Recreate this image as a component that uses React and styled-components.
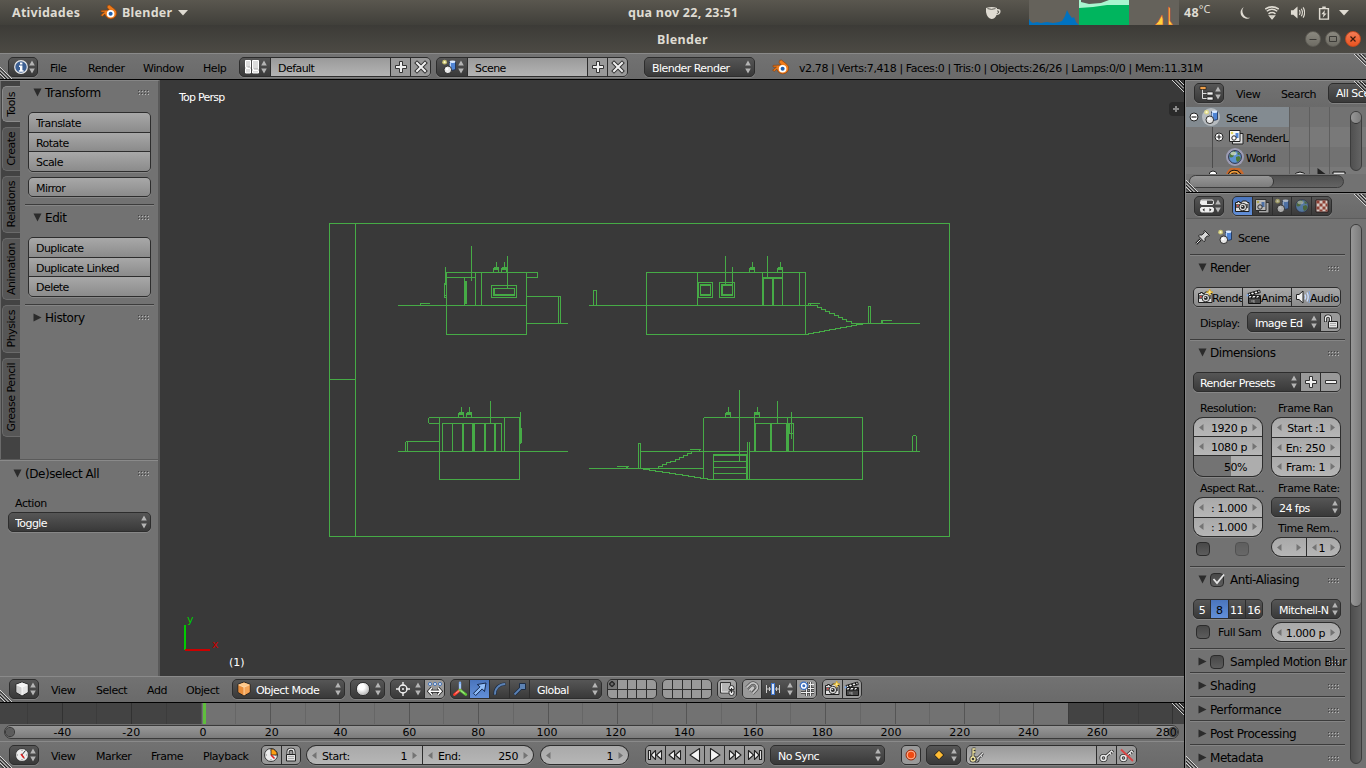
import React from "react";
import styled, { createGlobalStyle, css } from "styled-components";

const Global = createGlobalStyle`
    * { box-sizing: border-box; }
    body {
        margin: 0;
        width: 1366px;
        height: 768px;
        overflow: hidden;
        background: #393939;
        font-family: "DejaVu Sans", sans-serif;
        font-size: 11px;
        letter-spacing: -0.45px;
        color: #000;
        cursor: default;
    }
    svg { display: block; flex: none; }
`;

/* ---------- icons ---------- */

const Svg = ({ w = 16, h = w, box, children }) => (
    <svg width={w} height={h} viewBox={box || "0 0 16 16"} fill="none">{children}</svg>
);

const BlenderLogo = ({ size = 17 }) => (
    <Svg w={size} h={size}>
        <path d="M7.3 1.2 L9 1 L14 5 A5.6 5.2 0 1 1 4.6 9.5 L2.2 11.6 L0.6 10.6 L4.2 7.6 H1 L1 6 L7.8 5.7 H8.6 L6.6 3 Z" fill="#ee7b1b" stroke="#8a3d08" strokeWidth="0.6" />
        <circle cx="10" cy="9.2" r="3.6" fill="#fff" />
        <circle cx="10" cy="9.2" r="1.9" fill="#1f5fae" />
    </Svg>
);
const InfoIcon = () => (
    <Svg>
        <circle cx="8" cy="8" r="6.3" fill="#3c5f92" stroke="#e8e8e8" strokeWidth="1.2" />
        <path d="M7 3.5h2.4v2H7zM6 6.6h3.4v4.6h1.2v1.5H5.8v-1.5H7V8.1H6z" fill="#fff" />
    </Svg>
);
const ScreenIcon = () => (
    <Svg>
        <path d="M1.5 1.5h5v7h-5zM1.5 9.500h5v4.500h-5zM8.500 1.500h6v9h-6zM8.500 11.500h6v2.500h-6z" fill="#dcdcdc" stroke="#fff" />
        <path d="M3.500 8h2.500M10 10h4" stroke="#aaa" />
    </Svg>
);
const SceneIcon = ({ size = 16 }) => (
    <Svg w={size}>
        <path d="M8.500 2.500h6v8q-3 1.600-6 0z" fill="#4f84d4" stroke="#1b2c4c" strokeWidth="0.8" />
        <ellipse cx="11.500" cy="2.700" rx="3" ry="1.300" fill="#dcebff" />
        <path d="M9.300 4v6.500" stroke="#b9d4fb" strokeWidth="1.300" />
        <circle cx="6.800" cy="10.800" r="3.800" fill="#e6e6e6" stroke="#222" strokeWidth="0.9" />
        <circle cx="6" cy="9.900" r="1.400" fill="#fff" />
        <circle cx="3.600" cy="3.200" r="2.400" fill="#e9e27a" fillOpacity="0.75" />
        <circle cx="3.600" cy="3.200" r="1.100" fill="#fffbd0" />
    </Svg>
);
const PlusIcon = () => (
    <Svg><path d="M6.500 2.500h3v4h4v3h-4v4h-3v-4h-4v-3h4z" fill="#f0f0f0" stroke="#333" /></Svg>
);
const MinusIcon = () => (
    <Svg><path d="M2.500 6.500h11v3h-11z" fill="#f0f0f0" stroke="#333" /></Svg>
);
const CrossIcon = () => (
    <Svg>
        <path d="M4 4l8 8M12 4l-8 8" stroke="#333" strokeWidth="4" strokeLinecap="square" />
        <path d="M4 4l8 8M12 4l-8 8" stroke="#f0f0f0" strokeWidth="2" strokeLinecap="square" />
    </Svg>
);
const CubeIcon = ({ top = "#f4f4f4", left = "#cfcfcf", right = "#e4e4e4", edge = "#fff" }) => (
    <Svg>
        <path d="M8 1l6.200 2.400v8L8 15l-6.200-3.600v-8z" fill={left} stroke="#252525" />
        <path d="M8 1.600l5.400 2L8 6.200 2.600 3.600z" fill={top} />
        <path d="M8 6.200l5.500-2.500v7.400L8 14.300z" fill={right} />
        <path d="M2.500 3.800L8 6.200l5.500-2.400M8 6.200v8" stroke={edge} strokeWidth="0.800" />
    </Svg>
);
const SphereIcon = () => (
    <Svg>
        <defs>
            <radialGradient id="ball" cx="0.400" cy="0.350" r="0.700"><stop offset="0.300" stopColor="#fff" /><stop offset="1" stopColor="#aaa" /></radialGradient>
        </defs>
        <circle cx="8" cy="8" r="6.600" fill="url(#ball)" stroke="#1c1c1c" strokeWidth="0.800" />
    </Svg>
);
const PivotIcon = () => (
    <Svg>
        <circle cx="8" cy="8" r="4" stroke="#f0f0f0" strokeWidth="1.400" />
        <path d="M8 1v4M8 11v4M1 8h4M11 8h4" stroke="#f0f0f0" strokeWidth="1.400" />
        <circle cx="8" cy="8" r="1" fill="#f0f0f0" />
    </Svg>
);
const CentersIcon = () => (
    <Svg>
        <circle cx="3" cy="3" r="1.500" fill="#fff" stroke="#3a6cb4" /><circle cx="8" cy="3" r="1.500" fill="#fff" stroke="#3a6cb4" /><circle cx="13" cy="3" r="1.500" fill="#fff" stroke="#3a6cb4" />
        <path d="M5 6.800L1.800 10.300 5 13.800M11 6.800l3.200 3.500-3.200 3.500M2.500 10.300h11" stroke="#222" strokeWidth="3" />
        <path d="M5 6.800L1.800 10.300 5 13.800M11 6.800l3.200 3.500-3.200 3.500M2.500 10.300h11" stroke="#fff" strokeWidth="1.400" />
    </Svg>
);
const AxesIcon = () => (
    <Svg>
        <path d="M8 8.500V1.800" stroke="#7fb0f5" strokeWidth="2.400" strokeLinecap="round" />
        <path d="M8 9l-5.500 4.500" stroke="#ff3a2a" strokeWidth="2.800" strokeLinecap="round" />
        <path d="M8 9l5.800 4.500" stroke="#5fc837" strokeWidth="2.800" strokeLinecap="round" />
        <path d="M8 8V3M7.500 9.300L3.500 12.600M8.500 9.300L12.500 12.600" stroke="#fff" strokeOpacity="0.700" strokeWidth="0.800" />
    </Svg>
);
const TranslateIcon = () => (
    <Svg><path d="M1.500 12.300L8 5.800 5.300 3.500 14 2l-1.500 8.500-2.300-2.600-6.500 6.600z" fill="#8fbcf7" stroke="#14284e" /></Svg>
);
const RotateIcon = () => (
    <Svg>
        <path d="M3 14C2.500 7 7 3.200 13.500 3" stroke="#1c2c44" strokeWidth="3.200" />
        <path d="M3 13.600C2.700 7.300 7 3.300 13.200 3" stroke="#5c82b4" strokeWidth="1.900" />
    </Svg>
);
const ScaleIcon = () => (
    <Svg>
        <path d="M2.500 13.500L8 8" stroke="#1c2c44" strokeWidth="3.200" />
        <path d="M7.500 2.500h6v6h-6z" fill="#5c82b4" stroke="#1c2c44" />
        <path d="M2.500 13.500L9 7" stroke="#5c82b4" strokeWidth="1.800" />
    </Svg>
);
const LockCamIcon = () => (
    <Svg>
        <path d="M1.500 1.500h10v10.500h-10z" fill="#b5b5b5" stroke="#333" />
        <path d="M2.500 2.500v8.500h8" stroke="#e4e4e4" />
        <path d="M12.500 4.500q2.500 0 2.500 2.500v1.500h-5V7q0-2.500 2.500-2.500zM12.500 14.500q2.500 0 2.500-2.500v-2h-5v2q0 2.500 2.500 2.500z" fill="#e8e8e8" stroke="#2a2a2a" strokeWidth="0.900" />
        <path d="M12.500 7v5" stroke="#2a2a2a" />
    </Svg>
);
const MagnetIcon = () => (
    <Svg>
        <path d="M2.500 6.600l4-3.800q3-2 5.500.4 2.600 2.800.4 5.500L8.600 12.600M5 9.500L8.300 6.300q1-.6 1.300.7L7 10" stroke="#555" strokeWidth="3.200" />
        <path d="M2.500 6.600l4-3.800q3-2 5.500.4 2.600 2.800.4 5.500L8.600 12.600M5 9.500L8.300 6.300q1-.6 1.300.7L7 10" stroke="#c4c4c4" strokeWidth="1.700" />
    </Svg>
);
const IncrementIcon = () => (
    <Svg>
        <path d="M1.500 4v8M14.500 4v8M4.500 6v4M11.500 6v4M1.500 8h13" stroke="#ccc" />
        <path d="M6.600 2.500h2.800v11H6.600z" fill="#fff" stroke="#3f75cc" strokeWidth="1.200" />
    </Svg>
);
const SnapGridIcon = () => (
    <Svg>
        <path d="M7.500 1v14M11.500 1v14M2 11.500h13M9 7.500h6" stroke="#333" strokeWidth="2.600" />
        <path d="M7.500 1v14M11.500 1v14M2 11.500h13M9 7.500h6M10 3.500h5" stroke="#eee" strokeWidth="1.200" />
        <circle cx="4.800" cy="4.800" r="3.600" fill="#fff" stroke="#3a6fc2" strokeWidth="1.200" /><circle cx="4.800" cy="4.800" r="1.500" fill="#3a6fc2" />
    </Svg>
);
const CameraIcon = ({ spark }) => (
    <Svg>
        <path d="M1.500 4.500h2v-1h2v1h2l1-1.500h4l1 1.500h1.500v9h-13.500z" fill="#e2e2e2" stroke="#1c1c1c" />
        <path d="M2 6h12v4H2z" fill="#666" />
        <circle cx="8.800" cy="9" r="3.800" fill="#ddd" stroke="#333" />
        <circle cx="8.800" cy="9" r="2" fill="#2b2b2b" /><circle cx="8.200" cy="8.400" r="0.700" fill="#fff" />
        <path d="M3 7h1.500v1.500H3z" fill="#e44" />
        {spark && <path d="M12.700 0l.9 2.300 2.400.9-2.400.9-.9 2.300-.9-2.300-2.400-.9 2.400-.9z" fill="#ffe98a" stroke="#d9a514" strokeWidth="0.700" />}
    </Svg>
);
const ClapperIcon = () => (
    <Svg>
        <path d="M2.500 8.500h12v6h-12z" fill="#4a4a4a" stroke="#111" />
        <path d="M2.500 6.500h12v2.500h-12zM2 4.500l11.500-3.500.8 2.500-11.500 3.500z" fill="#f0f0f0" stroke="#111" strokeWidth="0.900" />
        <path d="M4 4l1.500 2M7.500 3l1.500 2M11 2l1.500 2M5 9l1.500-2M9 9l1.500-2M12.500 9L14 7" stroke="#111" strokeWidth="1.300" />
        <path d="M5 12h3M8 11v3" stroke="#aaa" strokeWidth="0.800" />
        <circle cx="1.600" cy="6.300" r="1.100" fill="#79aaf0" />
    </Svg>
);
const ClockIcon = ({ wedge }) => (
    <Svg>
        <circle cx="8" cy="8" r="6.500" fill="#ececec" stroke="#3a3a3a" />
        <path d="M8 2.500v1.500M8 12v1.500M2.500 8H4M12 8h1.500" stroke="#888" />
        {wedge && <path d="M8 8V1.800A6.200 6.200 0 0 1 14.200 8z" fill="#ff9e12" stroke="#222" strokeWidth="0.800" />}
        {wedge
            ? <path d="M8 8l3.500 3.500" stroke="#d22" strokeWidth="1.600" />
            : <><path d="M11.500 3.500L7.800 8l2.500 3.500" stroke="#333" strokeWidth="1" /><path d="M7 7l3 4" stroke="#d22" strokeWidth="1.600" /></>}
    </Svg>
);
const LockIcon = ({ open }) => (
    <Svg>
        <path d={open ? "M2.500 8V4.500q0-2.500 2.500-2.500t2.500 2.500v3" : "M5 8V5q0-2.800 3-2.800T11 5v3"} stroke="#222" strokeWidth="3" />
        <path d={open ? "M2.500 7.500V4.500q0-2.500 2.500-2.500t2.500 2.500v3" : "M5 8V5q0-2.800 3-2.800T11 5v3"} stroke="#eee" strokeWidth="1.300" />
        <path d={open ? "M5.500 7.500h9v6.500h-9z" : "M3.500 7.500h9v6.500h-9z"} fill="#e4e4e4" stroke="#222" />
        <path d={open ? "M7 9.500h6M7 11.500h6" : "M5 9.500h6M5 11.500h6"} stroke="#aaa" />
    </Svg>
);
const transport = {
    first: "M1.500 3.500h2v9h-2zM8.500 3.500v9L4 8zM14.500 3.500v9L9.500 8z",
    back: "M7.500 3.500v9L2 8zM13.500 3.500v9L8.500 8z",
    reverse: "M12.500 1.500v13L3 8z",
    play: "M3.500 1.500v13L13 8z",
    forward: "M2.500 3.500v9L7.500 8zM8.500 3.500v9L14 8z",
    last: "M1.500 3.500v9L6.500 8zM7.500 3.500v9L12 8zM12.500 3.500h2v9h-2z",
};
const TransportIcon = ({ name }) => (
    <Svg><path d={transport[name]} fill="#f5f5f5" stroke="#222" strokeWidth="1.100" strokeLinejoin="round" /></Svg>
);
const RecordIcon = () => (
    <Svg>
        <circle cx="8" cy="8" r="5" fill="#f04a12" stroke="#8b2a10" strokeWidth="0.900" />
        <circle cx="8" cy="8" r="3.900" stroke="#ffc4a8" strokeWidth="0.900" />
    </Svg>
);
const DiamondIcon = () => (
    <Svg><path d="M8 3.300L12.700 8 8 12.700 3.300 8z" fill="#ffbc33" stroke="#1c1c1c" /></Svg>
);
const keyPath = "M6.600 9.400l6-5.400M10.500 5.800l1.500 1.700M12.300 3.800l1.800 1.800";
const KeyIcon = ({ off }) => (
    <Svg>
        <path d={keyPath} stroke="#333" strokeWidth="3" /><circle cx="4.500" cy="11" r="2.500" stroke="#333" strokeWidth="3.200" />
        <path d={keyPath} stroke="#ececec" strokeWidth="1.300" /><circle cx="4.500" cy="11" r="2.500" stroke="#ececec" strokeWidth="1.500" />
        {off && <path d="M2 2.500l12 11.500" stroke="#d94444" strokeWidth="1.900" />}
    </Svg>
);
const KeySetIcon = () => (
    <Svg>
        <path d="M8 12l6-6M11.500 8l1.500 2" stroke="#333" strokeWidth="2.800" /><circle cx="7.500" cy="12.500" r="1.700" stroke="#333" strokeWidth="2.800" />
        <path d="M8 12l6-6M11.500 8l1.500 2" stroke="#ddd" strokeWidth="1.200" /><circle cx="7.500" cy="12.500" r="1.700" stroke="#ddd" />
        <path d="M4 10V1.500M3.500 2h3M4 5h2.500" stroke="#333" strokeWidth="2.800" /><circle cx="4" cy="12" r="2" fill="#555" stroke="#333" strokeWidth="3" />
        <path d="M4 10V1.500M3.500 2h3M4 5h2.500" stroke="#f2e6a0" strokeWidth="1.300" /><circle cx="4" cy="12" r="2" stroke="#f2e6a0" strokeWidth="1.400" />
    </Svg>
);
const OutlinerIcon = () => (
    <Svg>
        <path d="M3.500 4v9.500H8M3.500 8.500H8" stroke="#ddd" />
        <path d="M1 1.500h6v3H1z" fill="#f0a04a" stroke="#111" strokeWidth="0.600" />
        <path d="M8 7h6v3H8zM8 12h6v3H8z" fill="#f4f4f4" stroke="#111" strokeWidth="0.600" />
    </Svg>
);
const LayersIcon = () => (
    <Svg>
        <path d="M4.500 4.500h10.500v10.500h-10.500z" fill="#ddd" stroke="#222" />
        <path d="M1.500 1.500h10.500v11h-10.500z" fill="#f4f4f4" stroke="#222" />
        <path d="M7.500 4h3v5h-3z" fill="#4f84d4" /><circle cx="6" cy="9" r="2.200" fill="#fff" stroke="#222" /><circle cx="4" cy="4" r="1.300" fill="#e3d75c" />
    </Svg>
);
const WorldIcon = () => (
    <Svg>
        <circle cx="8" cy="8" r="6.400" fill="#5d93cf" stroke="#2b2f45" />
        <path d="M3 5q2-3 5-3l1 2-2 2-1 2-2 .5L2.500 8zM9 8l3-1 1.800 2-1.600 3-2.200 1-1-2.500zM10.500 3l2.500 1.500-.5 1.500-2-.5z" fill="#4f7a3a" />
        <ellipse cx="6.500" cy="4.500" rx="3" ry="1.800" fill="#fff" fillOpacity="0.600" />
    </Svg>
);
const PropsIcon = () => (
    <Svg>
        <rect x="1.500" y="2" width="13" height="4.500" rx="1.500" fill="#444" stroke="#eee" />
        <path d="M2 2.500h6v3.500H2z" fill="#eee" />
        <rect x="1.500" y="9.500" width="13" height="4.500" rx="1.500" fill="#eee" stroke="#eee" />
        <path d="M5.500 10.200L3.500 11.800l2 1.600zM10.500 10.200l2 1.600-2 1.600z" fill="#222" />
    </Svg>
);
const TextureIcon = () => (
    <Svg>
        <path d="M2 2h12v12H2z" fill="#d6c8c2" stroke="#2a1a1a" />
        <path d="M2.500 2.500h3v3h-3zM8.500 2.500h3v3h-3zM5.500 5.500h3v3h-3zM11.500 5.500h2v3h-2zM2.500 8.500h3v3h-3zM8.500 8.500h3v3h-3zM5.500 11.500h3v2h-3zM11.500 11.500h2v2h-2z" fill="#8f4237" />
    </Svg>
);
const PinIcon = () => (
    <Svg>
        <path d="M5.500 10.500L1.200 14.800" stroke="#222" strokeWidth="2.600" />
        <path d="M9.500 1.500l5 5-1.300.7-.9-.3-2.300 2.500.2 2.300-1.200 1L3.500 7l1-1.200 2.300.2L9.300 3.700 9 2.500z" fill="#d8d8d8" stroke="#222" />
        <path d="M5.500 10.500L1.500 14.500" stroke="#eee" strokeWidth="1" />
    </Svg>
);
const SpeakerIcon = () => (
    <Svg>
        <path d="M1.500 5.500h2.500l4-3.500v12l-4-3.500h-2.500z" fill="#eee" stroke="#222" />
        <path d="M10 5.500q1.300 2.500 0 5M12 3.500q2.400 4.500 0 9" stroke="#c8dcff" strokeWidth="1.400" />
        <path d="M14 2q3 6 0 12" stroke="#7ea6e6" />
    </Svg>
);
const Expander = ({ open }) => (
    <Svg w={10} box="0 0 10 10">
        <circle cx="5" cy="5" r="4" fill="#fff" stroke="#222" />
        <path d={open ? "M2.500 5h5" : "M2.500 5h5M5 2.500v5"} stroke="#222" strokeWidth="1.200" />
    </Svg>
);
const UpDown = () => (
    <Svg w={6} h={14} box="0 0 6 14">
        <path d="M3 0.500L5.800 5.500H0.200zM3 13.500L5.800 8.500H0.200z" fill="#b4b4b4" />
    </Svg>
);
const SideArrow = ({ right }) => (
    <Svg w={5} h={7} box="0 0 5 7"><path d={right ? "M0.500 0L5 3.500 0.500 7z" : "M4.500 0L0 3.500 4.500 7z"} fill="#747474" /></Svg>
);
const Fold = ({ open }) => (
    <Svg w={9} h={9} box="0 0 9 9"><path d={open ? "M0.500 0.500h8L4.500 8.500z" : "M0.500 0.500v8L8.500 4.500z"} fill="#2b2b2b" /></Svg>
);
const Dots = () => (
    <Svg w={12} h={6} box="0 0 12 6">
        {[0, 3, 6, 9].map(x => [0, 3].map(y => (
            <g key={x + "-" + y} shapeRendering="crispEdges">
                <rect x={x} y={y} width="1" height="1" fill="#444" />
                <rect x={x + 1} y={y + 1} width="1" height="1" fill="#b8b8b8" />
            </g>
        )))}
    </Svg>
);

/* ---------- shared controls ---------- */

const edge = "#2d2d2d";
const fills = {
    dark: "linear-gradient(#565656, #393939)",
    tool: "linear-gradient(#a8a8a8, #8b8b8b)",
    field: "linear-gradient(#9a9a9a, #b4b4b4)",
    num: "linear-gradient(#a9a9a9, #b6b6b6)",
    flat: "#999",
    on: "linear-gradient(#4a75bd, #628fd8)",
};
const Row = styled.div`
    display: flex;
    align-items: center;
    height: ${p => p.$h || 20}px;
    margin-top: ${p => p.$mt || 0}px;
    gap: ${p => p.$gap || 0}px;
`;
const Group = styled.div`
    display: flex;
    flex: none;
    flex-direction: ${p => (p.$column ? "column" : "row")};
    width: ${p => p.$w}px;
    height: ${p => p.$h || 20}px;
    margin-left: ${p => p.$ml || 0}px;
    margin-top: ${p => p.$mt || 0}px;
    border: 1px solid ${edge};
    border-radius: ${p => (p.$round ? 10 : 5)}px;
    overflow: hidden;
    background: ${edge};
    gap: 1px;
    box-shadow: 0 1px 0 rgba(255, 255, 255, 0.15);
`;
const Cell = styled.div`
    display: flex;
    flex: ${p => (p.$w ? "none" : "1 1 0")};
    width: ${p => (p.$w ? p.$w + "px" : "auto")};
    min-width: 0;
    min-height: 0;
    align-items: center;
    justify-content: ${p => p.$justify || "center"};
    padding: ${p => p.$pad || "0"};
    background: ${p => fills[p.$fill || "dark"]};
    color: ${p => (!p.$fill || p.$fill === "dark" ? "#fff" : "#000")};
    white-space: nowrap;
    overflow: hidden;
`;
const Label = styled.span`
    flex: none;
    width: ${p => (p.$w ? p.$w + "px" : "auto")};
    margin-left: ${p => p.$ml || 0}px;
    padding-top: ${p => p.$pt || 3}px;
    white-space: nowrap;
`;
const Clip = styled.span`
    flex: 1 1 auto;
    min-width: 0;
    overflow: hidden;
    padding-top: 2px;
    letter-spacing: -0.55px;
    text-align: ${p => p.$align || "left"};
`;
const Check = styled.div`
    display: flex;
    flex: none;
    width: 14px;
    height: 14px;
    margin-left: ${p => p.$ml || 0}px;
    border: 1px solid #2b2b2b;
    border-radius: 4px;
    background: linear-gradient(#484848, #5c5c5c);
    opacity: ${p => (p.$off ? 0.45 : 1)};
    & svg { margin: -3px 0 0 -1px; overflow: visible; }
`;

const IconMenu = ({ icon, w = 30, ml }) => (
    <Group $w={w} $ml={ml}>
        <Cell $justify="space-between" $pad="0 3px 0 4px">{icon}<UpDown /></Cell>
    </Group>
);
const Menu = ({ text, w, ml, icon, pad = "0 3px 0 7px" }) => (
    <Group $w={w} $ml={ml}>
        <Cell $pad={pad}>{icon}<Clip>{text}</Clip><UpDown /></Cell>
    </Group>
);
const NumCell = ({ label, value, w }) => (
    <Cell $fill="num" $w={w} $pad="0 5px" $justify="space-between">
        <SideArrow />
        {label && <Label $ml={5}>{label}</Label>}
        <Clip $align="right"><Inset>{value}</Inset></Clip>
        <SideArrow right />
    </Cell>
);
const Inset = styled.span`
    padding-right: 5px;
    letter-spacing: -0.4px;
`;

const Grip = ({ top }) => (
    <GripBox $top={top}>
        <Svg w={12} box="0 0 12 12">
            {top
                ? <path d="M0 0l12 12M3.500 0L12 8.500M7 0l5 5" stroke="#d6d6d6" strokeWidth="1" />
                : <path d="M0 0l12 12M0 3.500L8.500 12M0 7l5 5" stroke="#d6d6d6" strokeWidth="1" />}
            {top
                ? <path d="M1.500 0L12 10.500M5 0l7 7M8.500 0L12 3.500" stroke="#222" strokeWidth="1" />
                : <path d="M0 1.500L10.500 12M0 5l7 7M0 8.500L3.500 12" stroke="#222" strokeWidth="1" />}
        </Svg>
    </GripBox>
);
const GripBox = styled.div`
    position: absolute;
    ${p => (p.$top ? css`top: 0; right: 0;` : css`bottom: 0; left: 0;`)}
`;

/* ---------- desktop bars ---------- */

const TopPanel = styled.div`
    display: flex;
    align-items: center;
    height: 25px;
    background: linear-gradient(#5a574f, #403f3a);
    color: #dfdbd2;
    font: bold 12.5px "Noto Sans", sans-serif;
    letter-spacing: 0.25px;
`;
const PanelText = styled.span`
    width: ${p => p.$w}px;
    margin-left: ${p => p.$ml || 0}px;
    white-space: nowrap;
    & sup { font-size: 11px; line-height: 0; font-weight: normal; vertical-align: 4px; letter-spacing: 0; }
`;
const PanelIcon = styled.div`
    width: ${p => p.$w}px;
`;
const TitleBar = styled.div`
    display: flex;
    align-items: center;
    height: 28px;
    padding-left: 657px;
    background: linear-gradient(#3c3b37, #4c4a44);
    color: #dfdbd2;
    font: bold 12.5px "Noto Sans", sans-serif;
    letter-spacing: 0.35px;
`;
const WindowButtons = styled.div`
    display: flex;
    gap: 4px;
    margin: 0 5px 0 auto;
`;
const WindowButton = styled.div`
    width: 16px;
    height: 16px;
    border-radius: 50%;
    border: 1px solid ${p => (p.$close ? "#c44a20" : "#5d5b54")};
    background: ${p => (p.$close ? "linear-gradient(#f47c56, #e95420)" : "linear-gradient(#8b8980, #6e6c64)")};
`;
const Meters = () => (
    <Svg w={150} h={25} box="0 0 150 25">
        <path d="M0 0h50v25H0zM100 0h50v25h-50z" fill="#65625b" />
        <path d="M0 25v-6l2 3 2 1 4-1 4 1 6-1 6 1 6-1 3-1 3-5 2-6 2 4 3 4 2-1 2 5 3 3v1z" fill="#0072c0" />
        <path d="M50 0h50v25H50z" fill="#a9f5cf" />
        <path d="M52 0h28l-8 3-12 1-8-2z" fill="#5c5a54" />
        <path d="M50 8l14-1 14-2 22 0v20H50z" fill="#00b55e" />
        <path d="M126 25l3-3 4-7 1 4v6zM139.500 25V7l1.500 1v13l3 4z" fill="#ffd23c" stroke="#d4573a" strokeWidth="0.700" />
    </Svg>
);

const Desktop = () => (
    <>
        <TopPanel>
            <PanelText $ml={12} $w={88}>Atividades</PanelText>
            <PanelIcon $w={22}><BlenderLogo size={17} /></PanelIcon>
            <PanelText $w={56}>Blender</PanelText>
            <PanelIcon $w={450}><Svg w={10} h={6} box="0 0 10 6"><path d="M0 0h10L5 5.500z" fill="#dfdbd2" /></Svg></PanelIcon>
            <PanelText $w={358}>qua nov 22, 23:51</PanelText>
            <PanelIcon $w={43}>
                <Svg><path d="M0 3q6-2 11 0v1q4-.5 3.500 3-.5 3-4 3Q9 14 5.500 14 1 13 0 7z" fill="#dfdbd2" /><path d="M1.500 3.600q4 1.500 8 0M11 6q2-.5 1.800 1-.3 1.400-2 1.500" stroke="#55534c" strokeWidth="0.900" /></Svg>
            </PanelIcon>
            <PanelIcon $w={155}><Meters /></PanelIcon>
            <PanelText $w={54}>48<sup>°C</sup></PanelText>
            <PanelIcon $w={27}><Svg w={14} h={14}><path d="M6.500 1A7.200 7.200 0 1 0 14 13.500 8 8 0 0 1 6.500 1z" fill="#dfdbd2" /></Svg></PanelIcon>
            <PanelIcon $w={25}>
                <Svg w={14} h={14}><path d="M8 14.500l2.500-3h-5zM4 9q4-3 8 0M2 6q6-4.500 12 0M0.300 3.500q7.700-5 15.400 0" stroke="#dfdbd2" strokeWidth="1.700" /></Svg>
            </PanelIcon>
            <PanelIcon $w={27}>
                <Svg w={15} h={15}><path d="M1 5.500h2.500L8 1.500v13L3.500 10.500H1z" fill="#dfdbd2" /><path d="M10 5.500q1.500 2.500 0 5M12 4q2.500 4 0 8M14 2.500q3.200 5.500 0 11" stroke="#dfdbd2" strokeWidth="1.200" /></Svg>
            </PanelIcon>
            <PanelIcon $w={22}>
                <Svg w={14} h={16}><path d="M3 3h10v12H3zM6 1.500h4" stroke="#dfdbd2" strokeWidth="1.700" /><path d="M9 4.500L5 9.500h2.500L6.500 13.500 11 8.500H8.500z" fill="#dfdbd2" /></Svg>
            </PanelIcon>
            <Svg w={10} h={6} box="0 0 10 6"><path d="M0 0h10L5 5.500z" fill="#dfdbd2" /></Svg>
        </TopPanel>
        <TitleBar>
            Blender
            <WindowButtons>
                <WindowButton><Svg w={14} box="0 0 14 14"><path d="M3.500 7.500h7" stroke="#3c3b37" /></Svg></WindowButton>
                <WindowButton><Svg w={14} box="0 0 14 14"><path d="M3.500 4.500h7v5h-7z" stroke="#3c3b37" /></Svg></WindowButton>
                <WindowButton $close><Svg w={14} box="0 0 14 14"><path d="M4.500 4.500l5 5M9.500 4.500l-5 5" stroke="#3c1a0c" strokeWidth="1.200" /></Svg></WindowButton>
            </WindowButtons>
        </TitleBar>
    </>
);

/* ---------- info header ---------- */

const Header = styled.div`
    position: relative;
    display: flex;
    flex: none;
    align-items: center;
    height: ${p => p.$h || 26}px;
    padding: ${p => p.$pt || 0}px 0 ${p => p.$pb || 0}px ${p => p.$pl || 8}px;
    border-top: 1px solid #8a8a8a;
    background: linear-gradient(#727272, #6a6a6a);
    overflow: hidden;
`;
const InfoBar = styled(Header)`
    height: 27px;
    border-bottom: 1px solid #000;
`;
const DataBlock = ({ icon, name, ml }) => (
    <Group $w={192} $ml={ml}>
        <Cell $w={30} $justify="space-between" $pad="0 3px 0 4px">{icon}<UpDown /></Cell>
        <Cell $fill="field" $pad="0 7px"><Clip>{name}</Clip></Cell>
        <Cell $fill="flat" $w={19}><PlusIcon /></Cell>
        <Cell $fill="flat" $w={19}><CrossIcon /></Cell>
    </Group>
);
const Info = () => (
    <InfoBar $pt={1}>
        <IconMenu icon={<InfoIcon />} />
        <Label $ml={12} $w={38}>File</Label>
        <Label $w={55}>Render</Label>
        <Label $w={60}>Window</Label>
        <Label $w={36}>Help</Label>
        <DataBlock icon={<ScreenIcon />} name="Default" />
        <DataBlock icon={<SceneIcon />} name="Scene" ml={5} />
        <Menu text="Blender Render" w={111} ml={16} />
        <LogoSlot><BlenderLogo size={17} /></LogoSlot>
        <Stats>v2.78 | Verts:7,418 | Faces:0 | Tris:0 | Objects:26/26 | Lamps:0/0 | Mem:11.31M</Stats>
        <Grip top />
        <Grip />
    </InfoBar>
);
const LogoSlot = styled.div`
    width: 27px;
    margin-left: 17px;
`;
const Stats = styled(Label)`
    letter-spacing: -0.4px;
`;

/* ---------- tool shelf ---------- */

const Shelf = styled.div`
    display: flex;
    flex-direction: column;
    width: 160px;
    background: #727272;
    border-right: 2px solid #5a5a5a;
    border-top: 1px solid #858585;
`;
const ShelfTop = styled.div`
    display: flex;
    height: 379px;
`;
const Tabs = styled.div`
    display: flex;
    flex-direction: column;
    gap: 5px;
    width: 20px;
    padding: 5px 0 0 1px;
    background: #434343;
    border-left: 1px solid #6a6a6a;
`;
const Tab = styled.div`
    display: flex;
    align-items: center;
    justify-content: center;
    height: ${p => p.$h}px;
    border: 1px solid ${p => (p.$active ? "#8c8c8c" : "#6b6b6b")};
    border-right: none;
    border-radius: 5px 0 0 5px;
    background: ${p => (p.$active ? "#727272" : "#565656")};
    & span {
        writing-mode: vertical-rl;
        transform: rotate(180deg);
    }
`;
const ShelfBody = styled.div`
    flex: 1;
    padding: 0 4px 0 5px;
`;
const PanelTitle = styled.div`
    display: flex;
    align-items: center;
    height: ${p => p.$h || 24}px;
    padding: 0 4px 0 8px;
    font-size: 12px;
    letter-spacing: -0.45px;
    white-space: nowrap;
    & > span { margin-left: 3px; padding-top: 1px; flex: 1; min-width: 0; }
    & > span + svg { margin: 2px 0 0 -20px; }
    & > ${Check} + span { margin-left: 6px; }
`;
const ShelfPanel = styled.div`
    height: ${p => p.$h}px;
    border-top: ${p => (p.$first ? "none" : "1px solid #3c3c3c")};
    box-shadow: ${p => (p.$first ? "none" : "inset 0 1px 0 #858585")};
`;
const Operator = styled.div`
    flex: 1;
    border-top: 1px solid #8a8a8a;
    box-shadow: 0 -1px 0 #5a5a5a;
    padding: 0 4px 0 5px;
`;
const ToolGroup = ({ items, mt }) => (
    <Group $column $w={123} $h={items.length * 20} $ml={3} $mt={mt}>
        {items.map(t => <Cell key={t} $fill="tool" $pad="0 7px"><Clip>{t}</Clip></Cell>)}
    </Group>
);
const tabs = [["Tools", 36], ["Create", 44], ["Relations", 57], ["Animation", 62], ["Physics", 48], ["Grease Pencil", 79]];

const ToolShelf = () => (
    <Shelf>
        <ShelfTop>
            <Tabs>
                {tabs.map(([name, h], i) => <Tab key={name} $h={h} $active={i === 0}><span>{name}</span></Tab>)}
            </Tabs>
            <ShelfBody>
                <ShelfPanel $first $h={123}>
                    <PanelTitle $h={22}><Fold open /><span>Transform</span><Dots /></PanelTitle>
                    <ToolGroup items={["Translate", "Rotate", "Scale"]} mt={9} />
                    <ToolGroup items={["Mirror"]} mt={5} />
                </ShelfPanel>
                <ShelfPanel $h={100}>
                    <PanelTitle><Fold open /><span>Edit</span><Dots /></PanelTitle>
                    <ToolGroup items={["Duplicate", "Duplicate Linked", "Delete"]} mt={8} />
                </ShelfPanel>
                <ShelfPanel $h={60}>
                    <PanelTitle><Fold /><span>History</span><Dots /></PanelTitle>
                </ShelfPanel>
            </ShelfBody>
        </ShelfTop>
        <Operator>
            <PanelTitle><Fold open /><span>(De)select All</span><Dots /></PanelTitle>
            <Row $h={20} $mt={7}><Label $ml={10}>Action</Label></Row>
            <Menu text="Toggle" w={143} ml={3} pad="0 3px 0 6px" />
        </Operator>
    </Shelf>
);

/* ---------- 3D viewport ---------- */

const Viewport = styled.div`
    position: relative;
    flex: 1;
    background: #393939;
    color: #fff;
`;
const ViewName = styled.div`
    position: absolute;
    left: 19px;
    top: 11px;
    letter-spacing: -0.75px;
`;
const FrameNo = styled.div`
    position: absolute;
    left: 69px;
    top: 576px;
    letter-spacing: 0;
`;
const AddRegion = styled.div`
    position: absolute;
    right: 0;
    top: 22px;
    width: 15px;
    height: 14px;
    padding: 3px;
    border-radius: 4px 0 0 4px;
    background: #2a2a2a;
`;
const Canvas = styled.div`
    position: absolute;
    left: 0;
    top: 0;
`;

// front, side, back and left elevations inside a title-block sheet
const sheet = "M329 223H949V536H329zM355 223V536M329 379H355";
const elevations = [
    "M398 305H526M420 305V303H429M446 272H537V277H526M446 272V334H526V272M446 277H475M464 277V305M465 281V303M466 281V303M475 272V305M481 272V305M471 246V280M445 267V284M444 283V297H446M444 295H446M507 256V288M491 285H516V297H491zM493 288H514V295H493zM494 288V295M493 294H514M526 296H560V323M558 296V323M526 323H567",
    "M589 305H817M593 305V290H596V305M646 272H805V334H646zM697 272V305M698 282H712V297H698zM700 284H710V295H700zM700 285H710M700 294H710M719 282H734V297H719zM721 284H732V295H721zM722 284V295M722 285H731M722 294H731M725 256V284M732 267V295M767 256V277M762 272V305M763 277V305M762 277H782M762 278H782M772 278V305M773 278V305M782 272V305M799 272V305M808 305V303H819M810 303V305M817 305V307H821V309H825V311H829V313H834V315H838V317H842V319H846V321H851V323H919M805 334H808V333H813V332H819V331H824V330H829V329H835V328H840V327H846V326H851V325H856V324H862M868 323V306H870V323M881 323V320H891M882 320V323",
    "M398 451H567M429 417H519V479H439V417M428 418V422M429 423H439M405 451V442M406 441H439M407 442V451M442 451V423H501V451M452 423V451M462 423V451M463 423V451M472 423V451M473 423V451M474 423V451M484 423V451M485 423V451M494 423V451M495 423V451M504 417V451M490 401V423M520 412V443M521 428V442",
    "M589 468H703M640 451H747M749 451H919M704 417H862V479H707M703 418V478M638 468V443H640V468M617 466H628M626 466V468M627 466V468M658 468V466H662V464H666V462H670V461H675V459H679V457H683V455H687V453H691V451M690 449H700M699 449V451M643 469H649V470H655V471H662V472H669V473H675V474H682V475H688V476H694V477H700V478H707V479M739 390V461M713 479V454H747V479M713 455H747M713 461H747M713 467H747M713 473H747M746 454V479M747 479V442M748 441M749 442V479M777 401V423M791 412V438M754 412V451M755 423V451M754 423H793V451M770 423V451M771 423V451M786 423V451M787 417V451M788 423V451M789 423V433H793M912 451V436M913 435H915M916 436V451",
];
const chimneys = [[496, 267], [504, 267], [752, 267], [780, 267], [461, 412], [469, 412], [728, 412], [757, 412]];

const Drawing = () => (
    <Canvas>
        <svg width="1024" height="596" viewBox="160 80 1024 596" fill="none">
            <g transform="translate(0.5 0.5)" stroke="#46ab46" strokeLinecap="square" shapeRendering="crispEdges">
                <path d={sheet} />
                {elevations.map(d => <path key={d.slice(0, 9)} d={d} />)}
                {chimneys.map(([x, y]) => (
                    <path key={x + "-" + y} d={`M${x} ${y - 5}V${y}M${x - 2} ${y}H${x + 2}M${x - 2} ${y + 1}H${x + 2}M${x - 2} ${y + 2}H${x + 2}M${x - 3} ${y + 1}V${y + 5}M${x + 2} ${y}V${y + 5}`} />
                ))}
            </g>
            <path d="M185 625V650" stroke="#0c0" strokeWidth="2" />
            <path d="M185 650H210" stroke="#c00" strokeWidth="2" />
            <text x="187" y="623" fontSize="11" fill="#0c0">y</text>
            <text x="212" y="648" fontSize="11" fill="#c00">x</text>
        </svg>
    </Canvas>
);

const Layers = styled.div`
    display: grid;
    grid-template-columns: repeat(5, 1fr);
    gap: 1px;
    width: 50px;
    height: 20px;
    margin-left: 5px;
    border: 1px solid ${edge};
    border-radius: 5px;
    background: ${edge};
    overflow: hidden;
    & i { display: block; background: #999; }
    & i.on { background: radial-gradient(circle at 4px 4px, #666 1.5px, #2b2b2b 1.6px, #2b2b2b 2.6px, #777 3px); }
`;
const LayerGrid = ({ first }) => (
    <Layers>{Array.from({ length: 10 }, (_, i) => <i key={i} className={first && i === 0 ? "on" : ""} />)}</Layers>
);

const ViewHeader = () => (
    <Header $pl={9} $h={26} $pb={1}>
        <IconMenu icon={<CubeIcon />} />
        <Label $ml={12} $w={45}>View</Label>
        <Label $w={51}>Select</Label>
        <Label $w={39}>Add</Label>
        <Label $w={46}>Object</Label>
        <Menu text="Object Mode" w={113} pad="0 3px 0 3px" icon={<IconGap><CubeIcon top="#ffc98a" left="#e98d3a" right="#f5a558" edge="#ffe2bd" /></IconGap>} />
        <IconMenu icon={<SphereIcon />} w={35} ml={5} />
        <Group $w={55} $ml={5}>
            <Cell $w={33} $justify="space-between" $pad="0 3px 0 4px"><PivotIcon /><UpDown /></Cell>
            <Cell $fill="flat"><CentersIcon /></Cell>
        </Group>
        <Group $w={152} $ml={5}>
            <Cell $w={18}><AxesIcon /></Cell>
            <Cell $w={19} $fill="on"><TranslateIcon /></Cell>
            <Cell $w={19}><RotateIcon /></Cell>
            <Cell $w={19}><ScaleIcon /></Cell>
            <Cell $pad="0 3px 0 7px"><Clip>Global</Clip><UpDown /></Cell>
        </Group>
        <LayerGrid first />
        <LayerGrid />
        <Group $w={20} $ml={5}><Cell $fill="tool"><LockCamIcon /></Cell></Group>
        <Group $w={75} $ml={5}>
            <Cell $w={18} $fill="flat"><MagnetIcon /></Cell>
            <Cell $justify="space-between" $pad="0 3px 0 3px"><IncrementIcon /><UpDown /></Cell>
            <Cell $w={19} $fill="flat"><SnapGridIcon /></Cell>
        </Group>
        <Group $w={40} $ml={5}>
            <Cell $fill="flat"><CameraIcon spark /></Cell>
            <Cell $fill="flat"><ClapperIcon /></Cell>
        </Group>
        <Grip />
    </Header>
);
const IconGap = styled.div`
    margin-right: 4px;
`;

/* ---------- timeline ---------- */

const Timeline = styled.div`
    position: relative;
    display: flex;
    flex-direction: column;
    height: 66px;
    border-top: 1px solid #000;
    background: #6e6e6e;
`;
const Ruler = styled.div`
    position: relative;
    height: 21px;
    overflow: hidden;
    background: linear-gradient(90deg, #434343 201px, #727272 201px, #727272 1068px, #434343 1068px);
`;
const Ticks = styled.div`
    display: flex;
    height: 100%;
    padding-left: 27px;
    & i {
        flex: none;
        width: 34.71px;
        border-left: 1px solid rgba(0, 0, 0, 0.1);
    }
    & i:nth-child(even) { border-left-color: rgba(0, 0, 0, 0.25); }
`;
const Playhead = styled.div`
    position: absolute;
    left: 203px;
    top: 0;
    width: 3px;
    height: 100%;
    background: #5fbe3d;
`;
const Scroller = styled.div`
    display: flex;
    align-items: center;
    height: 14px;
    margin: 1px 5px 0 4px;
    padding-left: 26px;
    border: 1px solid #3a3a3a;
    border-radius: 7px;
    background:
        radial-gradient(circle at 5px 6px, #5c5c5c 4px, #3a3a3a 4.5px, transparent 5.5px),
        radial-gradient(circle at 1168px 6px, #5c5c5c 4px, #3a3a3a 4.5px, transparent 5.5px),
        linear-gradient(#989898, #7b7b7b);
    letter-spacing: 0;
    overflow: hidden;
`;
const Tick = styled.span`
    flex: none;
    width: 68.8px;
    padding-right: ${p => (p.$neg ? 6 : 0)}px;
    text-align: center;
`;
const FieldIcon = styled.div`
    margin-left: -5px;
`;
const frames = Array.from({ length: 17 }, (_, i) => -40 + i * 20);

const TimelineEditor = () => (
    <Timeline>
        <Ruler>
            <Ticks>{Array.from({ length: 34 }, (_, i) => <i key={i} />)}</Ticks>
            <Playhead />
            <Grip top />
        </Ruler>
        <Scroller>{frames.map(f => <Tick key={f} $neg={f < 0}>{f}</Tick>)}</Scroller>
        <TimeHeader $pl={9}>
            <IconMenu icon={<ClockIcon />} />
            <Label $ml={12} $w={45}>View</Label>
            <Label $w={55}>Marker</Label>
            <Label $w={52}>Frame</Label>
            <Label $w={58}>Playback</Label>
            <Group $w={40}>
                <Cell $fill="flat"><ClockIcon wedge /></Cell>
                <Cell $fill="flat"><LockIcon /></Cell>
            </Group>
            <Group $round $w={228} $ml={5}>
                <NumCell label="Start:" value="1" w={115} />
                <NumCell label="End:" value="250" />
            </Group>
            <Group $round $w={89} $ml={6}><NumCell value="1" /></Group>
            <Group $w={120} $ml={16}>
                {Object.keys(transport).map(n => <Cell key={n} $fill="flat"><TransportIcon name={n} /></Cell>)}
            </Group>
            <Menu text="No Sync" w={115} ml={5} />
            <Group $w={20} $ml={16}><Cell $fill="flat"><RecordIcon /></Cell></Group>
            <IconMenu icon={<DiamondIcon />} w={35} ml={5} />
            <Group $w={171} $ml={5}>
                <Cell $fill="field" $justify="flex-start" $pad="0 7px"><FieldIcon><KeySetIcon /></FieldIcon></Cell>
                <Cell $w={19} $fill="flat"><KeyIcon /></Cell>
                <Cell $w={19} $fill="flat"><KeyIcon off /></Cell>
            </Group>
            <Grip />
        </TimeHeader>
    </Timeline>
);
const TimeHeader = styled(Header)`
    height: 27px;
    margin-top: 2px;
`;

/* ---------- outliner ---------- */

const Outliner = styled.div`
    position: relative;
    height: 112px;
    overflow: hidden;
    background: #727272;
`;
const Tree = styled.div`
    position: relative;
    height: 67px;
    overflow: hidden;
    background: repeating-linear-gradient(#727272 0 20px, #797979 20px 40px);
`;
const TreeRow = styled.div`
    display: flex;
    align-items: center;
    width: 104px;
    height: 20px;
    padding-left: ${p => p.$indent}px;
    overflow: hidden;
    white-space: nowrap;
    background: ${p => (p.$selected ? "#838b91" : "transparent")};
`;
const Disc = styled.div`
    display: flex;
    flex: none;
    align-items: center;
    justify-content: center;
    width: 18px;
    height: 18px;
    margin: 0 2px 0 3px;
    border-radius: 50%;
    background: ${p => p.$bg || "transparent"};
`;
const Columns = styled.div`
    position: absolute;
    left: 103px;
    top: 0;
    width: 41px;
    height: 100%;
    border: 1px solid #5f5f5f;
    border-width: 0 1px;
    background: linear-gradient(90deg, transparent 19px, #5f5f5f 19px, #5f5f5f 20px, transparent 20px);
`;
const Branch = styled.div`
    position: absolute;
    left: 26px;
    top: 20px;
    height: 41px;
    border-left: 1px solid #4c4c4c;
`;
const TreeScroll = styled.div`
    position: absolute;
    left: 164px;
    top: 31px;
    width: 12px;
    height: 60px;
    border: 1px solid #3c3c3c;
    border-radius: 6px;
    background: linear-gradient(90deg, #505050, #636363);
    &::before {
        content: "";
        display: block;
        height: 11px;
        border-radius: 6px;
        border-bottom: 1px solid #333;
        background: linear-gradient(90deg, #979797, #7c7c7c);
    }
`;
const TreeScrollX = styled.div`
    width: 155px;
    height: 13px;
    margin: 1px 0 0 3px;
    border: 1px solid #3c3c3c;
    border-radius: 7px;
    background: linear-gradient(#505050, #636363);
    &::before {
        content: "";
        display: block;
        width: 83px;
        height: 100%;
        border-radius: 7px;
        border-right: 1px solid #333;
        background: linear-gradient(#979797, #7c7c7c);
    }
`;
const TreePeek = styled.div`
    position: absolute;
    left: 21px;
    top: 61px;
    display: flex;
    height: 6px;
    overflow: hidden;
`;

const OutlinerEditor = () => (
    <Outliner>
        <Header $h={27} $pb={2}>
            <IconMenu icon={<OutlinerIcon />} />
            <Label $ml={12} $w={45}>View</Label>
            <Label $w={47}>Search</Label>
            <Group $w={60}><Cell $justify="flex-start" $pad="1px 7px 0">All Sce</Cell></Group>
            <Grip top />
        </Header>
        <Tree>
            <TreeRow $selected $indent={3}><Expander open /><Disc $bg="#b6bbbf"><SceneIcon /></Disc><Label $ml={4} $pt={2}>Scene</Label></TreeRow>
            <TreeRow $indent={28}><Expander /><Disc><LayersIcon /></Disc><Label $ml={-1} $pt={2}>RenderLa</Label></TreeRow>
            <TreeRow $indent={37}><Disc $bg="#9c9cb4"><WorldIcon /></Disc><Label $pt={2}>World</Label></TreeRow>
            <Branch />
            <TreePeek>
                <svg width="140" height="16" viewBox="0 0 140 16" fill="none">
                    <circle cx="6" cy="7" r="4" fill="#fff" stroke="#222" />
                    <circle cx="28" cy="8" r="9" fill="#c96a2e" />
                    <path d="M22 9q1-7 8-5l4 4" stroke="#111" strokeWidth="3.500" /><path d="M22 9q1-7 8-5l4 4" stroke="#f3a03c" strokeWidth="1.700" />
                    <path d="M86 8q7-8 14 0" stroke="#111" fill="#ddd" /><path d="M110.500 0v12l8-6z" fill="#222" />
                    <path d="M126 4h12v6h-12z" fill="#ddd" stroke="#111" />
                </svg>
            </TreePeek>
            <Columns />
        </Tree>
        <TreeScrollX />
        <TreeScroll />
        <Grip />
    </Outliner>
);

/* ---------- properties ---------- */

const Properties = styled.div`
    position: relative;
    display: flex;
    flex-direction: column;
    flex: 1;
    min-height: 0;
    border-top: 1px solid #000;
    background: #727272;
`;
const PropsHead = styled(Header)`
    border-bottom: 1px solid #5c5c5c;
`;
const PropsBody = styled.div`
    display: flex;
    flex: 1;
    min-height: 0;
    overflow: hidden;
`;
const Stack = styled.div`
    width: 155px;
    margin-left: 4px;
`;
const Section = styled.div`
    height: ${p => p.$h || 24}px;
    border-top: 1px solid #3c3c3c;
    box-shadow: inset 0 1px 0 #858585;
    & > ${PanelTitle} { height: 23px; padding-top: 2px; padding-right: 5px; }
    & > ${Row}, & > ${Group} { margin-left: 3px; }
`;
const Context = styled.div`
    display: flex;
    align-items: center;
    height: 35px;
    padding-left: 5px;
    gap: 6px;
`;
const Cols = styled.div`
    display: flex;
    gap: 8px;
    margin-left: 3px;
`;
const Col = styled.div`
    width: 70px;
`;
const ColLabel = styled.div`
    height: ${p => p.$h || 20}px;
    padding: ${p => p.$pt || 5}px 0 0 7px;
    margin-right: -3px;
    white-space: nowrap;
    overflow: hidden;
`;
const PropScroll = styled.div`
    width: 12px;
    height: 540px;
    margin: 5px 0 0 5px;
    border: 1px solid #3c3c3c;
    border-radius: 6px;
    background: linear-gradient(90deg, #4e4e4e, #626262);
    &::before {
        content: "";
        display: block;
        height: 381px;
        border-radius: 6px;
        border-bottom: 1px solid #333;
        background: linear-gradient(90deg, #979797, #7c7c7c);
    }
`;
const Percent = styled(Cell)`
    background: linear-gradient(90deg, #737373 37px, #adadad 37px);
    padding: 2px 15px 0 0;
    color: #000;
    justify-content: flex-end;
`;
const Dim = styled.div`
    opacity: 0.65;
`;

const PropertiesEditor = () => (
    <Properties>
        <PropsHead $h={26}>
            <IconMenu icon={<PropsIcon />} />
            <Group $w={100} $ml={8}>
                <Cell $fill="on"><CameraIcon /></Cell>
                <Cell><Dim><LayersIcon /></Dim></Cell>
                <Cell><Dim><SceneIcon /></Dim></Cell>
                <Cell><Dim><WorldIcon /></Dim></Cell>
                <Cell><TextureIcon /></Cell>
            </Group>
            <Grip top />
        </PropsHead>
        <PropsBody>
            <Stack>
                <Context><PinIcon /><SceneIcon /><Label $ml={-1}>Scene</Label></Context>
                <Section $h={85}>
                    <PanelTitle><Fold open /><span>Render</span><Dots /></PanelTitle>
                    <Group $w={148} $mt={9}>
                        <Cell $fill="tool" $justify="flex-start" $pad="0 0 0 3px"><CameraIcon spark /><Label $ml={-1}>Rende</Label></Cell>
                        <Cell $fill="tool" $justify="flex-start" $pad="0 0 0 3px"><ClapperIcon /><Label $ml={-1}>Anima</Label></Cell>
                        <Cell $fill="tool" $justify="flex-start" $pad="0 0 0 3px"><SpeakerIcon /><Label $ml={-1}>Audio</Label></Cell>
                    </Group>
                    <Row $mt={5}>
                        <Label $ml={7} $w={47}>Display:</Label>
                        <Group $w={94}>
                            <Cell $pad="0 3px 0 7px"><Clip>Image Ed</Clip><UpDown /></Cell>
                            <Cell $w={19} $fill="flat"><LockIcon open /></Cell>
                        </Group>
                    </Row>
                </Section>
                <Section $h={227}>
                    <PanelTitle><Fold open /><span>Dimensions</span><Dots /></PanelTitle>
                    <Group $w={148} $mt={9}>
                        <Cell $pad="0 3px 0 6px"><Clip>Render Presets</Clip><UpDown /></Cell>
                        <Cell $w={19} $fill="flat"><PlusIcon /></Cell>
                        <Cell $w={19} $fill="flat"><MinusIcon /></Cell>
                    </Group>
                    <Cols>
                        <Col>
                            <ColLabel $h={25} $pt={10}>Resolution:</ColLabel>
                            <Group $round $column $w={70} $h={60}>
                                <NumCell value="1920 p" /><NumCell value="1080 p" /><Percent>50%</Percent>
                            </Group>
                            <ColLabel>Aspect Rat...</ColLabel>
                            <Group $round $column $w={70} $h={40}>
                                <NumCell value=":  1.000" /><NumCell value=":  1.000" />
                            </Group>
                            <Row $h={24}><Check $ml={3} /><Check $ml={25} $off /></Row>
                        </Col>
                        <Col>
                            <ColLabel $h={25} $pt={10}>Frame Ran</ColLabel>
                            <Group $round $column $w={70} $h={60}>
                                <NumCell value="Start :1" /><NumCell value="En: 250" /><NumCell value="Fram: 1" />
                            </Group>
                            <ColLabel>Frame Rate:</ColLabel>
                            <Menu text="24 fps" w={70} pad="0 2px 0 7px" />
                            <ColLabel>Time Rem...</ColLabel>
                            <Group $round $w={70}><NumCell value="" /><NumCell value="1" /></Group>
                        </Col>
                    </Cols>
                </Section>
                <Section $h={82}>
                    <PanelTitle>
                        <Fold open />
                        <Check $ml={3}><Svg><path d="M3.500 8l3.500 4L14 3.500" stroke="#e6e6e6" strokeWidth="1.800" /></Svg></Check>
                        <span>Anti-Aliasing</span><Dots />
                    </PanelTitle>
                    <Row $mt={9} $gap={8}>
                        <Group $w={70}>
                            <Cell $pad="2px 0 0">5</Cell><Cell $pad="2px 0 0" $fill="on">8</Cell><Cell $pad="2px 0 0">11</Cell><Cell $pad="2px 0 0">16</Cell>
                        </Group>
                        <Menu text="Mitchell-N" w={70} pad="0 2px 0 7px" />
                    </Row>
                    <Row $mt={3}>
                        <Check $ml={3} /><Label $ml={8} $w={53} $pt={1}>Full Sam</Label>
                        <Group $round $w={70}><NumCell value="1.000 p" /></Group>
                    </Row>
                </Section>
                <Section><PanelTitle><Fold /><Check $ml={3} /><span>Sampled Motion Blur</span><Dots /></PanelTitle></Section>
                {["Shading", "Performance", "Post Processing", "Metadata"].map(t => (
                    <Section key={t}><PanelTitle><Fold /><span>{t}</span><Dots /></PanelTitle></Section>
                ))}
            </Stack>
            <PropScroll />
        </PropsBody>
        <Grip />
    </Properties>
);

/* ---------- window ---------- */

const Work = styled.div`
    display: flex;
    height: 688px;
`;
const LeftSide = styled.div`
    display: flex;
    flex-direction: column;
    width: 1184px;
`;
const RightSide = styled.div`
    display: flex;
    flex-direction: column;
    width: 182px;
    padding-left: 1px;
    border-left: 1px solid #000;
    background: #868686;
    overflow: hidden;
`;
const View3D = styled.div`
    display: flex;
    height: 596px;
`;

export default function App() {
    return (
        <>
            <Global />
            <Desktop />
            <Info />
            <Work>
                <LeftSide>
                    <View3D>
                        <ToolShelf />
                        <Viewport>
                            <Drawing />
                            <ViewName>Top Persp</ViewName>
                            <FrameNo>(1)</FrameNo>
                            <AddRegion><Svg w={8} box="0 0 8 8"><path d="M4 1v6M1 4h6" stroke="#888" strokeWidth="2" /></Svg></AddRegion>
                            <Grip top />
                        </Viewport>
                    </View3D>
                    <ViewHeader />
                    <TimelineEditor />
                </LeftSide>
                <RightSide>
                    <OutlinerEditor />
                    <PropertiesEditor />
                </RightSide>
            </Work>
        </>
    );
}
